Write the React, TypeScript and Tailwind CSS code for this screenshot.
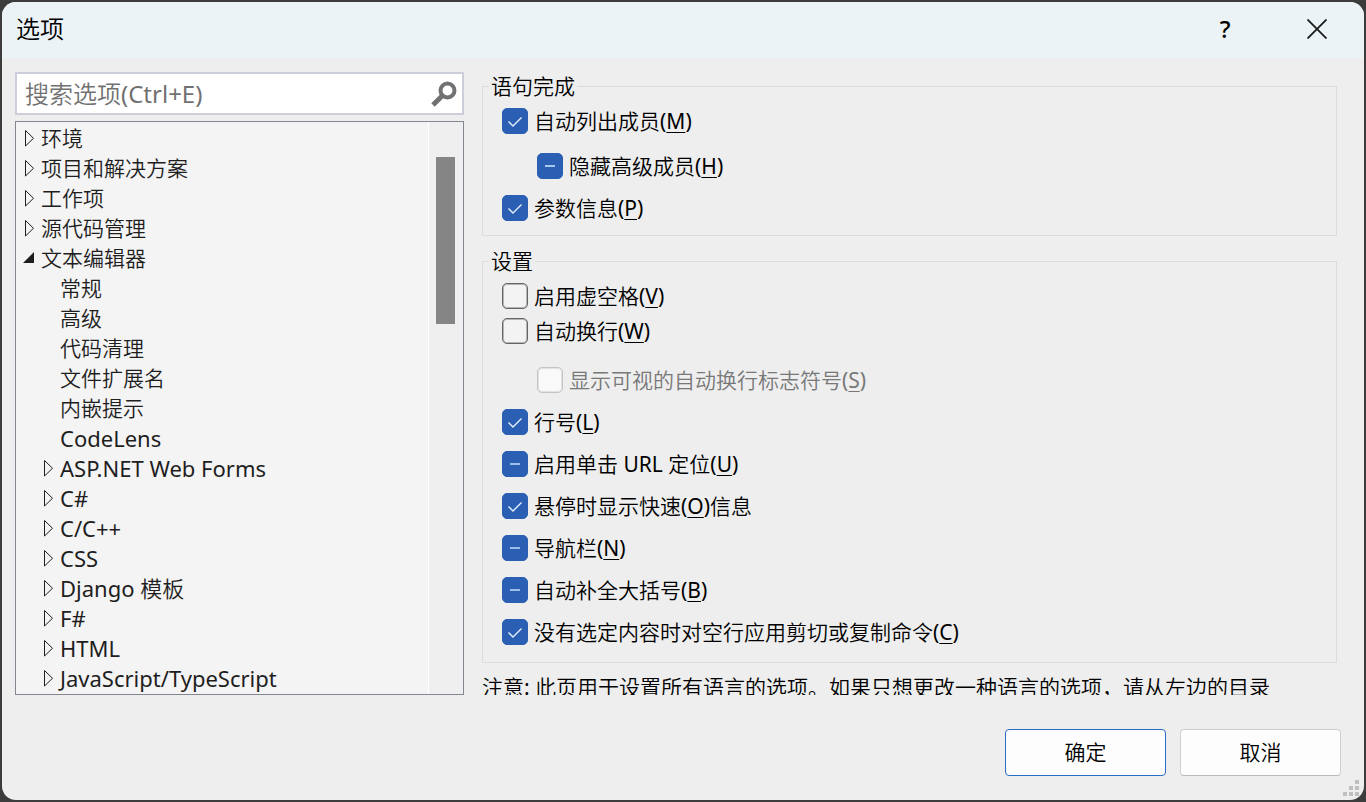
import { useEffect, useRef, useState } from "react";
import type { ReactNode } from "react";

type CheckState = "on" | "off" | "mixed";

interface TreeNode {
  label: string;
  level: 0 | 1;
  marker: "closed" | "open" | "none";
  latin?: boolean;
}

const nodes: TreeNode[] = [
  { label: "环境", level: 0, marker: "closed" },
  { label: "项目和解决方案", level: 0, marker: "closed" },
  { label: "工作项", level: 0, marker: "closed" },
  { label: "源代码管理", level: 0, marker: "closed" },
  { label: "文本编辑器", level: 0, marker: "open" },
  { label: "常规", level: 1, marker: "none" },
  { label: "高级", level: 1, marker: "none" },
  { label: "代码清理", level: 1, marker: "none" },
  { label: "文件扩展名", level: 1, marker: "none" },
  { label: "内嵌提示", level: 1, marker: "none" },
  { label: "CodeLens", level: 1, marker: "none", latin: true },
  { label: "ASP.NET Web Forms", level: 1, marker: "closed", latin: true },
  { label: "C#", level: 1, marker: "closed", latin: true },
  { label: "C/C++", level: 1, marker: "closed", latin: true },
  { label: "CSS", level: 1, marker: "closed", latin: true },
  { label: "Django 模板", level: 1, marker: "closed", latin: true },
  { label: "F#", level: 1, marker: "closed", latin: true },
  { label: "HTML", level: 1, marker: "closed", latin: true },
  { label: "JavaScript/TypeScript", level: 1, marker: "closed", latin: true },
];

function Marker({ kind }: { kind: TreeNode["marker"] }) {
  return (
    <svg className="h-[18px] w-3 shrink-0" viewBox="0 0 12 18" aria-hidden="true">
      {kind === "closed" && (
        <path d="M2.5 1.5V17L10.5 9.25Z" fill="none" stroke="#1e1e1e" strokeWidth="1" />
      )}
      {kind === "open" && <path d="M0 14H11V3Z" fill="#1e1e1e" />}
    </svg>
  );
}

function TreeRow({ node }: { node: TreeNode }) {
  return (
    <li
      role="treeitem"
      aria-expanded={node.marker === "none" ? undefined : node.marker === "open"}
      className={`flex h-[30px] items-center gap-[6px] leading-[30px] whitespace-nowrap ${
        node.level === 0 ? "pl-[7px]" : "pl-[26px]"
      } ${node.latin ? "text-[22px]" : "text-[21px]"}`}
    >
      <Marker kind={node.marker} />
      <span>{node.label}</span>
    </li>
  );
}

interface CheckRowProps {
  id: string;
  initial: CheckState;
  children: ReactNode;
  nested?: boolean;
  compact?: boolean;
  disabled?: boolean;
}

function CheckRow({ id, initial, children, nested, compact, disabled }: CheckRowProps) {
  const [state, setState] = useState<CheckState>(initial);
  const box = useRef<HTMLInputElement>(null);

  useEffect(() => {
    if (box.current) box.current.indeterminate = state === "mixed";
  }, [state]);

  return (
    <div
      className={`flex items-center gap-[6px] ${compact ? "h-[35px]" : "h-[42px]"} ${
        nested ? "pl-[54px]" : "pl-[19px]"
      }`}
    >
      <span className="grid size-[26px] shrink-0">
        <input
          ref={box}
          id={id}
          type="checkbox"
          disabled={disabled}
          checked={state === "on"}
          onChange={() => setState(state === "on" ? "off" : "on")}
          className="col-start-1 row-start-1 size-[26px] appearance-none rounded-[5px] border border-[#666666] bg-[#f3f3f3] inset-ring inset-ring-[#b4b4b4] checked:border-[#2b5fb3] checked:bg-[#2b5fb3] checked:inset-ring-[#2b5fb3] indeterminate:border-[#2b5fb3] indeterminate:bg-[#2b5fb3] indeterminate:inset-ring-[#2b5fb3] disabled:border-[#c4c4c4] disabled:bg-[#f9f9f9] disabled:inset-ring-[#e2e2e2]"
        />
        <svg
          className="pointer-events-none col-start-1 row-start-1 size-[26px]"
          viewBox="0 0 26 26"
          fill="none"
          aria-hidden="true"
        >
          {state === "on" && <path d="M6.5 13.5L11 18L19.5 9.5" stroke="#e6f2ff" strokeWidth="1.4" />}
          {state === "mixed" && <path d="M8 13H18" stroke="#a9c8ee" strokeWidth="1.8" />}
        </svg>
      </span>
      <label htmlFor={id} className={`leading-7 whitespace-nowrap ${disabled ? "text-[#787878]" : ""}`}>
        {children}
      </label>
    </div>
  );
}

function Key({ children }: { children: string }) {
  return <span className="underline decoration-1 underline-offset-[3px]">{children}</span>;
}

function Group({ title, children }: { title: string; children: ReactNode }) {
  return (
    <fieldset className="border border-[#dcdcdc]">
      <legend className="ml-[6px] px-[2px] leading-7">{title}</legend>
      {children}
    </fieldset>
  );
}

export default function App() {
  return (
    <div className="h-screen bg-[#3c3c3c] p-[2px] font-['Noto_Sans','Noto_Sans_CJK_SC_DemiLight','Noto_Sans_CJK_SC_Light','Noto_Sans_CJK_SC',sans-serif] text-[21px] text-black">
      <main className="flex h-full flex-col overflow-hidden rounded-[14px] bg-[#eeeeee]">
        <header className="flex h-14 shrink-0 items-center justify-between bg-[#ebf3f7] pb-[2px] pl-[14px]">
          <h1 className="text-2xl">选项</h1>
          <div className="flex h-full">
            <button type="button" aria-label="帮助" className="w-[90px] text-2xl font-medium">
              ?
            </button>
            <button type="button" aria-label="关闭" className="flex w-[94px] items-center justify-center">
              <svg className="size-5" viewBox="0 0 20 20" aria-hidden="true">
                <path d="M0.5 0.5L19.5 19.5M19.5 0.5L0.5 19.5" stroke="#1a1a1a" strokeWidth="1.8" />
              </svg>
            </button>
          </div>
        </header>

        <div className="flex min-h-0 flex-1 gap-[18px] pt-[14px] pr-[27px] pl-[13px]">
          <aside className="flex w-[449px] shrink-0 flex-col gap-[6px]">
            <div className="flex h-[43px] shrink-0 items-center border-2 border-[#cccedb] bg-white pr-[4px] pl-2">
              <input
                type="text"
                aria-label="搜索选项"
                placeholder="搜索选项(Ctrl+E)"
                className="h-full min-w-0 flex-1 bg-transparent text-2xl outline-none placeholder:text-[#717171]"
              />
              <svg className="size-7 shrink-0" viewBox="0 0 28 28" fill="none" aria-hidden="true">
                <circle cx="17.5" cy="10.5" r="7" stroke="#717171" strokeWidth="4" />
                <path d="M12.5 15.5L3 25" stroke="#717171" strokeWidth="5" />
              </svg>
            </div>
            <div className="flex min-h-0 flex-1 border border-[#828790] bg-[#f4f4f4]">
              <ul role="tree" className="min-w-0 flex-1 overflow-hidden pt-px text-[#1e1e1e]">
                {nodes.map((node) => (
                  <TreeRow key={node.label} node={node} />
                ))}
              </ul>
              <div className="w-[35px] shrink-0 border-l border-white bg-[#efefef] pt-[35px] pl-[7px]">
                <div className="h-[167px] w-[19px] bg-[#858585]" />
              </div>
            </div>
          </aside>

          <section className="min-h-0 min-w-0 flex-1 overflow-hidden">
            <Group title="语句完成">
              <div className="pb-[6px]">
                <CheckRow id="list-members" initial="on">
                  自动列出成员(<Key>M</Key>)
                </CheckRow>
                <div className="pt-[3px]">
                  <CheckRow id="hide-advanced" initial="mixed" nested>
                    隐藏高级成员(<Key>H</Key>)
                  </CheckRow>
                </div>
                <CheckRow id="parameter-info" initial="on">
                  参数信息(<Key>P</Key>)
                </CheckRow>
              </div>
            </Group>

            <div className="pt-[11px]">
              <Group title="设置">
                <div className="pt-[3px] pb-[9px]">
                  <CheckRow id="virtual-space" initial="off" compact>
                    启用虚空格(<Key>V</Key>)
                  </CheckRow>
                  <CheckRow id="word-wrap" initial="off" compact>
                    自动换行(<Key>W</Key>)
                  </CheckRow>
                  <div className="pt-[11px]">
                    <CheckRow id="wrap-glyphs" initial="off" nested disabled>
                      显示可视的自动换行标志符号(<Key>S</Key>)
                    </CheckRow>
                  </div>
                  <CheckRow id="line-numbers" initial="on">
                    行号(<Key>L</Key>)
                  </CheckRow>
                  <CheckRow id="url-navigation" initial="mixed">
                    启用单击 URL 定位(<Key>U</Key>)
                  </CheckRow>
                  <CheckRow id="quick-info" initial="on">
                    悬停时显示快速(<Key>O</Key>)信息
                  </CheckRow>
                  <CheckRow id="navigation-bar" initial="mixed">
                    导航栏(<Key>N</Key>)
                  </CheckRow>
                  <CheckRow id="brace-completion" initial="mixed">
                    自动补全大括号(<Key>B</Key>)
                  </CheckRow>
                  <CheckRow id="blank-line-cut" initial="on">
                    没有选定内容时对空行应用剪切或复制命令(<Key>C</Key>)
                  </CheckRow>
                </div>
              </Group>
            </div>

            <p className="pt-[10px] leading-7 whitespace-nowrap">
              注意: 此页用于设置所有语言的选项。如果只想更改一种语言的选项，请从左边的目录
            </p>
          </section>
        </div>

        <footer className="relative flex shrink-0 justify-end gap-[14px] pt-[34px] pr-[23px] pb-6">
          <button
            type="button"
            className="h-[47px] w-[161px] rounded-[4px] border border-[#2b6cc4] bg-[#fdfdfd]"
          >
            确定
          </button>
          <button
            type="button"
            className="h-[47px] w-[161px] rounded-[4px] border border-[#d0d0d0] border-b-[#bababa] bg-[#fdfdfd]"
          >
            取消
          </button>
          <svg
            className="absolute right-[5px] bottom-1 size-4"
            viewBox="0 0 16 16"
            fill="#bfbfbf"
            aria-hidden="true"
          >
            <path d="M12 0h4v4h-4zM6 6h4v4H6zM12 6h4v4h-4zM0 12h4v4H0zM6 12h4v4H6zM12 12h4v4h-4z" />
          </svg>
        </footer>
      </main>
    </div>
  );
}
